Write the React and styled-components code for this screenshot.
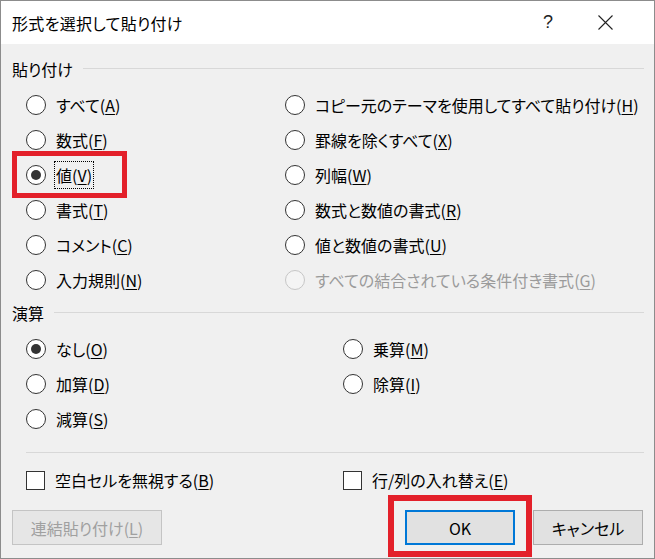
import React from 'react';
import styled, { createGlobalStyle } from 'styled-components';

const GlobalStyle = createGlobalStyle`
  html, body {
    margin: 0;
    padding: 0;
    background: #ffffff;
  }
  body {
    font-family: "Noto Sans CJK JP", "Noto Sans", sans-serif;
    font-feature-settings: "palt";
    color: #000;
  }
`;

const Window = styled.div`
  box-sizing: border-box;
  width: 655px;
  height: 559px;
  border: 1px solid #8c8c8c;
  background: #f0f0f0;
  display: flex;
  flex-direction: column;
`;

const TitleBar = styled.div`
  height: 43px;
  background: #ffffff;
  display: flex;
  align-items: center;
  padding-left: 11px;
`;

const Title = styled.div`
  flex: 1;
  font-size: 16px;
  letter-spacing: 0.3px;
`;

const HelpButton = styled.div`
  width: 18px;
  font-size: 18px;
  font-family: "Liberation Sans", sans-serif;
  font-weight: 300;
  color: #222;
  margin-right: 37px;
`;

const CloseButton = styled.div`
  width: 15px;
  height: 15px;
  margin-right: 41px;
  display: flex;
`;

const Body = styled.div`
  flex: 1;
  padding: 10px 10px 0 11px;
  display: flex;
  flex-direction: column;
`;

const GroupHeader = styled.div`
  height: 30px;
  display: flex;
  align-items: center;
  gap: 10px;
  font-size: 16px;
  margin-top: ${p => p.$top || 0}px;
`;

const GroupLine = styled.div`
  flex: 1;
  height: 1px;
  background: #d8d8d8;
  margin-top: -2px;
`;

const OptionGrid = styled.div`
  display: grid;
  grid-template-columns: ${p => p.$first}px 1fr;
  grid-auto-rows: 35px;
  padding-left: 14px;
  margin-top: 3px;
`;

const OptionItem = styled.label`
  position: relative;
  display: flex;
  align-items: center;
  gap: 10px;
  font-size: 16px;
  color: ${p => (p.$disabled ? '#9b9b9b' : '#000')};
`;

const RadioCircle = styled.span`
  box-sizing: border-box;
  width: 20px;
  height: 20px;
  border-radius: 50%;
  border: 1px solid ${p => (p.$disabled ? '#c6c6c6' : '#333')};
  background: ${p => (p.$disabled ? '#f4f4f4' : '#fff')};
  display: flex;
  align-items: center;
  justify-content: center;
  flex-shrink: 0;

  &::after {
    content: '';
    display: ${p => (p.$checked ? 'block' : 'none')};
    width: 10px;
    height: 10px;
    border-radius: 50%;
    background: #333;
  }
`;

const CheckSquare = styled.span`
  box-sizing: border-box;
  width: 19px;
  height: 19px;
  border: 1px solid #333;
  background: #fff;
  flex-shrink: 0;
`;

const LabelText = styled.span`
  padding: 1px 1px;
  margin-left: -2px;
  border: 1px dotted ${p => (p.$focused ? '#000' : 'transparent')};
  line-height: 24px;
`;

const Key = styled.span`
  text-decoration: underline;
  text-underline-offset: 2px;
`;

const Highlight = styled.span`
  position: absolute;
  box-sizing: border-box;
  left: ${p => p.$left}px;
  top: ${p => p.$top}px;
  width: ${p => p.$w}px;
  height: ${p => p.$h}px;
  border: ${p => p.$t}px solid #e3202a;
  pointer-events: none;
`;

const Separator = styled.div`
  height: 1px;
  background: #d8d8d8;
  margin: 16px 0 0 14px;
`;

const CheckRow = styled.div`
  display: grid;
  grid-template-columns: 317px 1fr;
  height: 30px;
  padding-left: 14px;
  margin-top: 12px;
`;

const ButtonRow = styled.div`
  display: flex;
  justify-content: space-between;
  margin-top: 15px;
  padding-right: 1px;
`;

const ButtonGroup = styled.div`
  display: flex;
  gap: 18px;
`;

const ButtonWrap = styled.div`
  position: relative;
  display: flex;
`;

const Button = styled.button`
  box-sizing: border-box;
  width: ${p => p.$w}px;
  height: 35px;
  font-family: "Noto Sans CJK JP", "Noto Sans", sans-serif;
  font-feature-settings: "palt";
  font-size: 16px;
  background: ${p => (p.$disabled ? '#e6e6e6' : '#e1e1e1')};
  color: ${p => (p.$disabled ? '#a0a0a0' : '#000')};
  border: ${p => (p.$default ? '2px solid #0078d7' : p.$disabled ? '1px solid #c4c4c4' : '1px solid #adadad')};
  padding: 0;
  cursor: default;
`;

const Label = ({ text, k, focused, disabled }) => (
  <LabelText $focused={focused}>
    {text}(<Key>{k}</Key>)
  </LabelText>
);

const Radio = ({ text, k, checked, disabled, focused, children }) => (
  <OptionItem $disabled={disabled}>
    <RadioCircle $checked={checked} $disabled={disabled} />
    <Label text={text} k={k} focused={focused} />
    {children}
  </OptionItem>
);

const Check = ({ text, k }) => (
  <OptionItem>
    <CheckSquare />
    <Label text={text} k={k} />
  </OptionItem>
);

const pasteOptions = [
  [{ text: 'すべて', k: 'A' }, { text: 'コピー元のテーマを使用してすべて貼り付け', k: 'H' }],
  [{ text: '数式', k: 'F' }, { text: '罫線を除くすべて', k: 'X' }],
  [{ text: '値', k: 'V', checked: true, focused: true, mark: true }, { text: '列幅', k: 'W' }],
  [{ text: '書式', k: 'T' }, { text: '数式と数値の書式', k: 'R' }],
  [{ text: 'コメント', k: 'C' }, { text: '値と数値の書式', k: 'U' }],
  [{ text: '入力規則', k: 'N' }, { text: 'すべての結合されている条件付き書式', k: 'G', disabled: true }],
];

const opOptions = [
  [{ text: 'なし', k: 'O', checked: true }, { text: '乗算', k: 'M' }],
  [{ text: '加算', k: 'D' }, { text: '除算', k: 'I' }],
  [{ text: '減算', k: 'S' }, null],
];

const renderRows = rows =>
  rows.flat().map((o, i) =>
    o ? (
      <Radio key={i} {...o}>
        {o.mark && <Highlight $left={-14} $top={-6} $w={115} $h={47} $t={5} />}
      </Radio>
    ) : (
      <span key={i} />
    )
  );

export default function App() {
  return (
    <>
      <GlobalStyle />
      <Window>
        <TitleBar>
          <Title>形式を選択して貼り付け</Title>
          <HelpButton>?</HelpButton>
          <CloseButton>
            <svg width="15" height="15" viewBox="0 0 15 15">
              <path d="M0.5 0.5 L14.5 14.5 M14.5 0.5 L0.5 14.5" stroke="#222" strokeWidth="1.1" fill="none" />
            </svg>
          </CloseButton>
        </TitleBar>
        <Body>
          <GroupHeader>
            貼り付け
            <GroupLine />
          </GroupHeader>
          <OptionGrid $first={259}>{renderRows(pasteOptions)}</OptionGrid>
          <GroupHeader $top={1}>
            演算
            <GroupLine />
          </GroupHeader>
          <OptionGrid $first={317}>{renderRows(opOptions)}</OptionGrid>
          <Separator />
          <CheckRow>
            <Check text="空白セルを無視する" k="B" />
            <Check text="行/列の入れ替え" k="E" />
          </CheckRow>
          <ButtonRow>
            <Button $w={150} $disabled disabled>
              連結貼り付け(<Key>L</Key>)
            </Button>
            <ButtonGroup>
              <ButtonWrap>
                <Button $w={110} $default>OK</Button>
                <Highlight $left={-17} $top={-15} $w={144} $h={62} $t={6} />
              </ButtonWrap>
              <Button $w={110}>キャンセル</Button>
            </ButtonGroup>
          </ButtonRow>
        </Body>
      </Window>
    </>
  );
}
